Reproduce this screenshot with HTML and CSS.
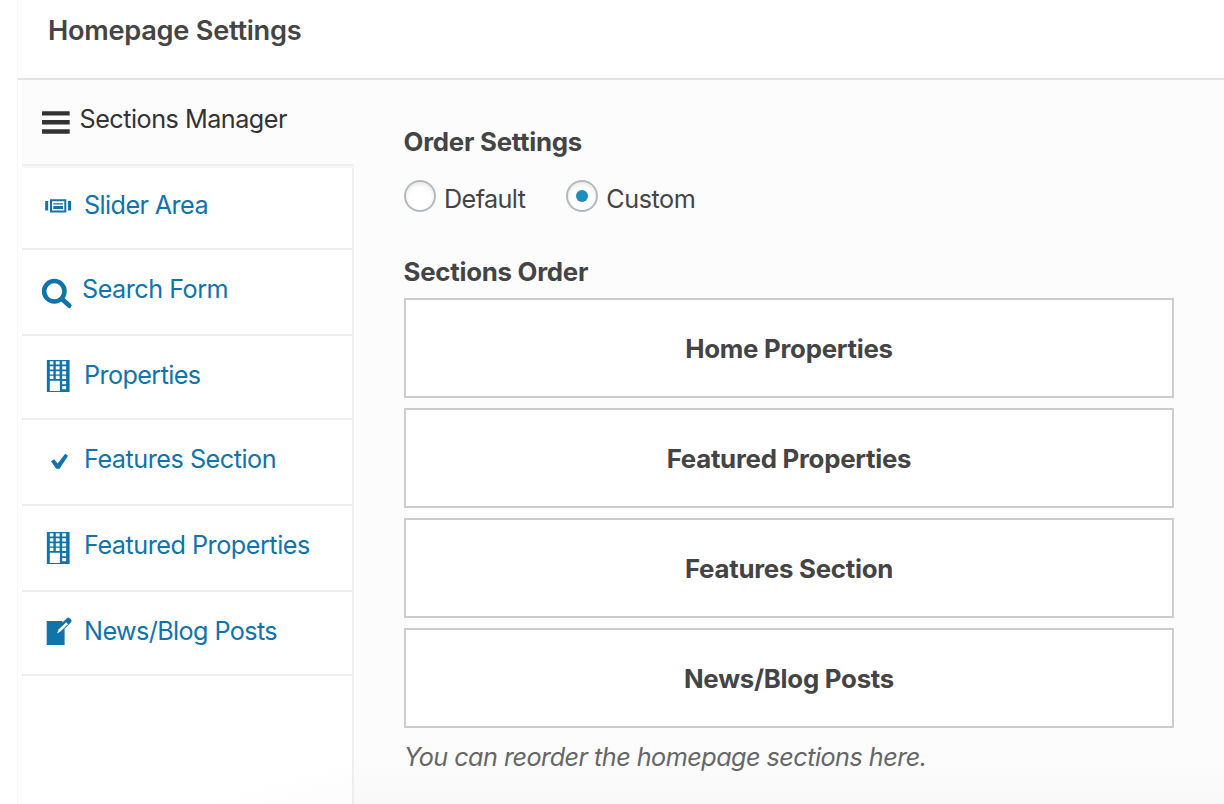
FILE: index.html
```html
<!DOCTYPE html>
<html lang="en">
<head>
<meta charset="utf-8">
<title>Homepage Settings</title>
<link rel="stylesheet" href="styles.css">
</head>
<body>
<svg class="sprite" aria-hidden="true">
  <symbol id="building" viewBox="0 0 24 33">
    <path fill="currentColor" fill-rule="evenodd" d="M0 0H23V32H0ZM3.2 1.300V4.5H6.800V1.300ZM9.200 1.300V4.5H13V1.300ZM15.600 1.300V4.5H19.5V1.300ZM3.2 6.300V9.5H6.800V6.300ZM9.200 6.300V9.5H13V6.300ZM15.600 6.300V9.5H19.5V6.300ZM3.2 11.200V14.5H6.800V11.200ZM9.200 11.200V14.5H13V11.200ZM15.600 11.200V14.5H19.5V11.200ZM3.2 15.800V19H6.800V15.800ZM9.200 15.800V19H13V15.800ZM15.600 15.800V19H19.5V15.800ZM3.2 20.700V31H13.300V20.700ZM15.600 21V24.2H19.5V21ZM15.600 26V29.2H19.5V26Z"/>
  </symbol>
</svg>
<div class="panel">
  <header class="panel-header"><h2 class="title">Homepage Settings</h2></header>
  <div class="panel-body">
    <nav class="tabs">
      <a class="tab active"><svg class="icon" viewBox="0 0 58 62"><path fill="currentColor" d="M20.600 31.200h26.500a.6.6 0 0 1 .6.6v3.700h-27.700v-3.700a.6.6 0 0 1 .6-.6ZM20 40h27.700v4.500H20ZM20 49.200h27.700v4.500H20Z"/></svg><span>Sections Manager</span></a>
      <a class="tab short"><svg class="icon" viewBox="0 0 58 62"><path fill="currentColor" fill-rule="evenodd" d="M23.200 35h3v9.500h-3ZM46 35h3v9.500h-3ZM28 33.200h16.300v13.200H28ZM30 35.200v9.200h12.300v-9.200ZM31.300 37.200h9.700v1.400h-9.700ZM31.300 40h9.700v3h-9.700Z"/></svg><span>Slider Area</span></a>
      <a class="tab search"><svg class="icon" viewBox="0 0 58 62"><g fill="none" stroke="currentColor"><circle cx="32.300" cy="41.300" r="10.200" stroke-width="4.500"/><path d="M40.500 49.500L47.200 55.600" stroke-width="4.800" stroke-linecap="round"/></g></svg><span>Search Form</span></a>
      <a class="tab short"><svg class="icon" viewBox="0 0 58 62"><use href="#building" x="24.600" y="24" width="24" height="33"/></svg><span>Properties</span></a>
      <a class="tab"><svg class="icon" viewBox="0 0 58 62"><path fill="currentColor" d="M29 41.200L32.200 39.300L35.600 43.400L43.200 33.800L46 35.800L37.600 48.700H34.200Z"/></svg><span class="loose">Features Section</span></a>
      <a class="tab"><svg class="icon" viewBox="0 0 58 62"><use href="#building" x="24.600" y="26" width="24" height="33"/></svg><span class="loose">Featured Properties</span></a>
      <a class="tab short"><svg class="icon" viewBox="0 0 58 62"><path fill="currentColor" d="M24.700 29H42.600V53H24.700Z"/><path fill="#fff" d="M42.800 29H40L42.800 34Z"/><path fill="currentColor" d="M40.300 30.500L45 26.200Q46.400 25 47.700 26.200L49.200 27.700Q50.200 29 49 30.300L42.600 37Z"/><path d="M35 41.400L36.800 37.200L44.200 30.200L46 32.200L38.700 39.300Z" fill="#fff"/></svg><span>News/Blog Posts</span></a>
    </nav>
    <main class="content">
      <h3 class="label">Order Settings</h3>
      <div class="radios">
        <label class="choice"><i class="radio"></i><span>Default</span></label>
        <label class="choice"><i class="radio checked"></i><span class="loose">Custom</span></label>
      </div>
      <h3 class="label">Sections Order</h3>
      <div class="cards">
        <div class="card">Home Properties</div>
        <div class="card">Featured Properties</div>
        <div class="card">Features Section</div>
        <div class="card">News/Blog Posts</div>
      </div>
      <p class="note">You can reorder the homepage sections here.</p>
    </main>
  </div>
</div>
</body>
</html>
```
FILE: styles.css
```css
* { box-sizing: border-box; }
body { margin: 0; height: 804px; overflow: hidden; background: #fff; padding-left: 17px; font: 25.2px/30px Inter, "Liberation Sans", sans-serif; color: #444; letter-spacing: -0.6px; }
h2, h3, p { margin: 0; font-size: inherit; }
.title { font-size: 27.2px; font-weight: 600; letter-spacing: -0.27px; }
.label, .card { font-size: 25.8px; font-weight: 700; letter-spacing: -0.25px; }
.label { margin-left: -0.5px; }
span { white-space: nowrap; }
.loose { letter-spacing: -0.48px; }
.sprite { position: absolute; width: 0; height: 0; }
.panel { height: 804px; border-left: 1px solid #f8f8f8; display: flex; flex-direction: column; }
.panel-header { height: 80px; padding: 16px 0 0 30px; border-bottom: 2px solid #e3e3e6; }
.panel-body { flex: 1; display: flex; padding-left: 4px; }
.tabs { width: 332px; border-right: 2px solid #eee; background: linear-gradient(165deg, #fff 94%, #fcfcfc); }
.tab { display: flex; gap: 4px; height: 86px; border-bottom: 2px solid #eee; color: #1073aa; }
.tab.short { height: 84px; }
.tab.active { width: 332px; height: 86px; gap: 0; color: #333; background: #fcfcfc; box-shadow: 0 2px #f6f6f6; letter-spacing: -0.5px; }
.tab.search { gap: 2px; letter-spacing: -0.5px; }
.tab span { padding-top: 24px; }
.icon { width: 58px; height: 62px; flex: none; }
.active .icon { width: 57.400px; height: 62px; }
.active .icon { width: 58px; margin-right: -0.5px; }
.content { flex: 1; background: linear-gradient(#fcfcfc 0, #fcfcfc 680px, #f8f8f8 724px); padding: 47px 50px 0; }
.radios { display: flex; gap: 40px; height: 100px; padding-top: 23px; }
.choice { display: flex; gap: 8px; height: 36px; }
.choice + .choice { padding-left: 1px; }
.choice span { padding-top: 4px; }
.radio { width: 32px; height: 32px; border: 2px solid #b4b9be; border-radius: 50%; background: #fff; box-shadow: inset 0 2px 4px rgba(0,0,0,.1); display: grid; place-items: center; }
.radio.checked::before { content: ""; width: 12px; height: 12px; border-radius: 50%; background: #1e8cbe; }
.cards { display: grid; gap: 10px; margin-top: 11px; }
.card { height: 100px; padding-top: 1px; border: 2px solid #ccc; background: #fff; display: grid; place-items: center; }
.note { margin-top: 14px; font-style: italic; color: #666; letter-spacing: -0.52px; }
```
